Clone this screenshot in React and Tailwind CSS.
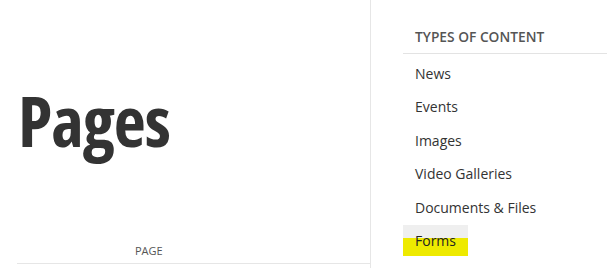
import React from "react";

const items = ["News", "Events", "Images", "Video Galleries", "Documents & Files", "Forms"];

export default function App() {
  return (
    <div className="flex h-[268px] w-[607px] overflow-hidden bg-white font-['Open_Sans',sans-serif]">
      <div className="flex w-[371px] shrink-0 flex-col border-r border-[#e6e6e6] pl-[17px]">
        <h1 className="mt-[72px] pl-[1px] text-[70px] font-bold leading-[96px] tracking-[-1px] text-[#333] [font-stretch:75%]">
          Pages
        </h1>
        <div className="mt-auto flex h-[25px] items-center border-b border-[#e6e6e6] pl-[118px] text-[11px] text-[#555]">
          PAGE
        </div>
        <div className="h-[4px]" />
      </div>
      <div className="flex-1 pl-[32px]">
        <div className="mt-[27px] border-b border-[#e3e3e3] pb-[6px] pl-[12px] text-[13.75px] font-semibold leading-[20px] text-[#555]">
          TYPES OF CONTENT
        </div>
        <ul className="mt-[3.5px] flex flex-col gap-[2.5px]">
          {items.map((it) =>
            it === "Forms" ? (
              <li
                key={it}
                className="self-start h-[31px] px-[12px] text-[14px] leading-[31px] text-[#222] bg-[linear-gradient(#efefef_0,#efefef_42%,#eeea00_42%,#eeea00_100%)]"
              >
                {it}
              </li>
            ) : (
              <li key={it} className="h-[31px] px-[12px] text-[14px] leading-[31px] text-[#333]">
                {it}
              </li>
            )
          )}
        </ul>
      </div>
    </div>
  );
}
